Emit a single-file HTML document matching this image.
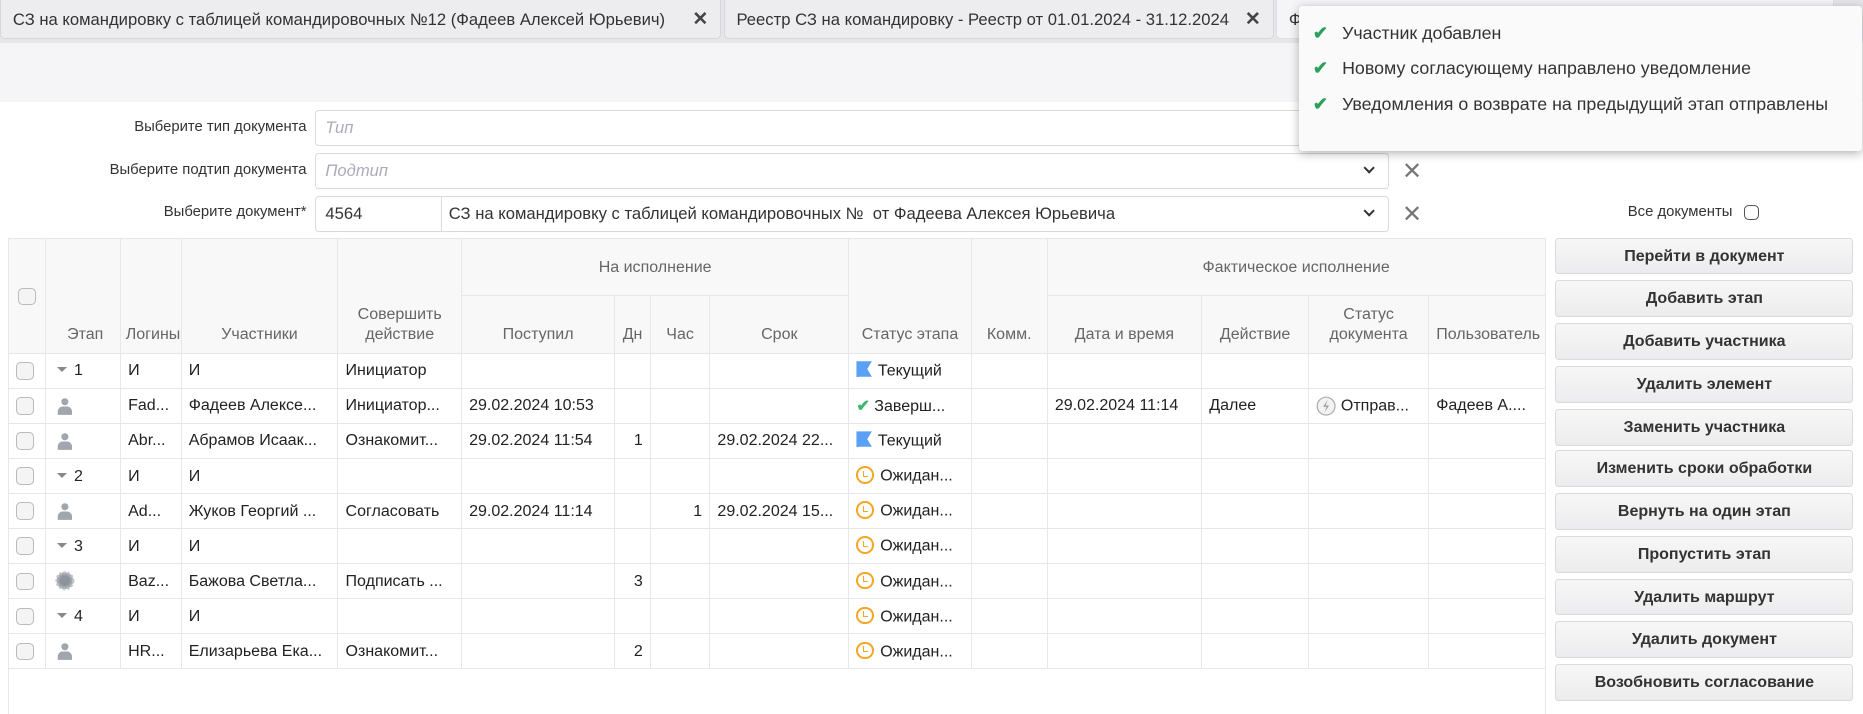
<!DOCTYPE html>
<html><head><meta charset="utf-8"><style>
*{box-sizing:border-box;margin:0;padding:0}
html,body{width:1863px;height:714px;overflow:hidden;background:#fff}
#w{position:relative;width:1568px;height:601px;zoom:1.18814;font-family:"Liberation Sans",sans-serif;color:#333;font-size:14px}
.tabs{position:absolute;left:0;top:0;width:1568px;height:36px;background:#e6e6ea}
.tab{position:absolute;top:0;height:33px;background:#ededf0;border:1px solid #d6d6dc;border-top:none;border-radius:0 0 4px 4px;font-size:14px;line-height:33px;padding-left:10px;color:#333;white-space:nowrap;overflow:hidden}
.tab .x{position:absolute;right:10px;top:0;font-weight:bold;font-size:16px;color:#444}
.band{position:absolute;left:0;top:36px;width:1568px;height:50px;background:#f5f5f7}
.lbl{position:absolute;right:1310px;font-size:12.5px;color:#333;text-align:right;white-space:nowrap}
.inp{position:absolute;left:265px;width:904px;height:30px;border:1px solid #d9d9e0;border-radius:3px;background:#fff;font-size:14px;line-height:28px;padding-left:8px}
.ph{color:#aab;font-style:italic}
.chev{position:absolute;right:12px;top:8px;width:7px;height:7px;border-right:2px solid #333;border-bottom:2px solid #333;transform:rotate(45deg)}
.clr{position:absolute;left:1180px;font-size:20px;color:#777}
table{position:absolute;left:7px;top:200px;border-collapse:collapse;table-layout:fixed;width:1293px}
td,th{border:1px solid #e6e6ec;font-size:13.5px;white-space:nowrap;overflow:hidden;padding:0 6px}
th{background:#f8f8f9;color:#666;font-weight:normal;text-align:center;vertical-align:bottom;padding-bottom:7px;line-height:17px}
th.g{vertical-align:middle;padding:0}
td{height:29.5px;color:#222}
.cb{display:inline-block;width:15px;height:15px;border:1px solid #bbb;border-radius:4px;background:#f4f4f4;vertical-align:middle}
.tri{display:inline-block;width:0;height:0;border-left:5px solid transparent;border-right:5px solid transparent;border-top:5px solid #888;margin:0 6px 2px 3px;vertical-align:middle}
.r{text-align:right}
.flag{display:inline-block;width:13px;height:13px;background:#5aa0f5;clip-path:polygon(0 0,100% 0,70% 50%,100% 100%,15% 100%,15% 110%,0 110%);vertical-align:-1px;margin-right:5px}
.clk{display:inline-block;width:15px;height:15px;border:2px solid #f5a623;border-radius:50%;vertical-align:-3px;margin-right:5px;position:relative}
.clk:after{content:"";position:absolute;left:4px;top:2px;width:3px;height:4px;border-left:1.5px solid #f5a623;border-bottom:1.5px solid #f5a623}
.btn{position:absolute;left:1309px;width:251px;height:31px;border:1px solid #dadade;border-radius:3px;background:linear-gradient(#f7f7f7,#ececee);font-size:13.5px;font-weight:bold;color:#333;text-align:center;line-height:29px}
.toast{position:absolute;left:1093px;top:5px;width:474px;height:122px;background:#fafafa;border-radius:3px;box-shadow:0 2px 8px rgba(0,0,0,.3);font-size:15px;color:#333}
.toast div{position:absolute;left:12px}
.toast b{color:#2aa05a;margin-right:12px;font-weight:bold}
svg{vertical-align:middle}
</style></head><body><div id="w">
<div class="tabs">
<div class="tab" style="left:0;width:607px">СЗ на командировку с таблицей командировочных №12 (Фадеев Алексей Юрьевич)<span class="x">✕</span></div>
<div class="tab" style="left:609px;width:463px">Реестр СЗ на командировку - Реестр от 01.01.2024 - 31.12.2024<span class="x">✕</span></div>
<div class="tab" style="left:1074px;width:470px;background:#f5f5f7;border-color:#e0e0e4">Ф</div>
</div>
<div class="band"></div>
<div class="lbl" style="top:100px">Выберите тип документа</div>
<div class="inp" style="top:93px"><span class="ph">Тип</span><span class="chev"></span></div>
<div class="clr" style="top:96px">✕</div>
<div class="lbl" style="top:136px">Выберите подтип документа</div>
<div class="inp" style="top:129px"><span class="ph">Подтип</span><span class="chev"></span></div>
<div class="clr" style="top:132px">✕</div>
<div class="lbl" style="top:172px">Выберите документ*</div>
<div class="inp" style="top:165px">4564<span style="position:absolute;left:105px;top:0;bottom:0;border-left:1px solid #d9d9e0;padding-left:6px">СЗ на командировку с таблицей командировочных №&nbsp; от Фадеева Алексея Юрьевича</span><span class="chev"></span></div>
<div class="clr" style="top:168px">✕</div>
<div style="position:absolute;left:1370px;top:172px;font-size:12.5px">Все документы <span class="cb" style="background:#fff;border-color:#555;width:13px;height:13px;margin-left:6px"></span></div>

<table>
<colgroup><col style="width:31px"><col style="width:63px"><col style="width:51px"><col style="width:132px"><col style="width:104px"><col style="width:129px"><col style="width:30px"><col style="width:50px"><col style="width:117px"><col style="width:103px"><col style="width:64px"><col style="width:130px"><col style="width:90px"><col style="width:101px"><col style="width:98px"></colgroup>
<tr style="height:48px"><th rowspan="2" style="vertical-align:middle;padding:0"><span class="cb"></span></th><th rowspan="2" class="r" style="padding-right:14px">Этап</th><th rowspan="2" style="text-align:left;padding-left:4px">Логины</th><th rowspan="2">Участники</th><th rowspan="2">Совершить<br>действие</th><th colspan="4" class="g">На исполнение</th><th rowspan="2">Статус этапа</th><th rowspan="2">Комм.</th><th colspan="4" class="g">Фактическое исполнение</th></tr>
<tr style="height:49px"><th>Поступил</th><th>Дн</th><th>Час</th><th>Срок</th><th>Дата и время</th><th>Действие</th><th>Статус<br>документа</th><th style="text-align:left;padding-left:6px">Пользователь</th></tr>
<tr><td><span class="cb"></span></td><td><span class="tri"></span>1</td><td>И</td><td>И</td><td>Инициатор</td><td></td><td></td><td></td><td></td><td><span class="flag"></span>Текущий</td><td></td><td></td><td></td><td></td><td></td></tr>
<tr><td><span class="cb"></span></td><td><svg width="20" height="16" viewBox="0 0 20 16"><circle cx="10" cy="4" r="3" fill="#a0a6ad"/><path d="M4 15v-3c0-2 2-4 4-4h4c2 0 4 2 4 4v3z" fill="#a0a6ad"/></svg></td><td>Fad...</td><td>Фадеев Алексе...</td><td>Инициатор...</td><td>29.02.2024 10:53</td><td></td><td></td><td></td><td><span style="color:#3bb86b;font-weight:bold">✔</span> Заверш...</td><td></td><td>29.02.2024 11:14</td><td>Далее</td><td><svg width="17" height="17" viewBox="0 0 17 17"><circle cx="8.5" cy="8.5" r="7.5" fill="#f2f2f2" stroke="#aaa"/><path d="M10 3L6 9h3l-2 5 4-6H8z" fill="#999"/></svg> Отправ...</td><td>Фадеев А....</td></tr>
<tr><td><span class="cb"></span></td><td><svg width="20" height="16" viewBox="0 0 20 16"><circle cx="10" cy="4" r="3" fill="#a0a6ad"/><path d="M4 15v-3c0-2 2-4 4-4h4c2 0 4 2 4 4v3z" fill="#a0a6ad"/></svg></td><td>Abr...</td><td>Абрамов Исаак...</td><td>Ознакомит...</td><td>29.02.2024 11:54</td><td class="r">1</td><td></td><td>29.02.2024 22...</td><td><span class="flag"></span>Текущий</td><td></td><td></td><td></td><td></td><td></td></tr>
<tr><td><span class="cb"></span></td><td><span class="tri"></span>2</td><td>И</td><td>И</td><td></td><td></td><td></td><td></td><td></td><td><span class="clk"></span>Ожидан...</td><td></td><td></td><td></td><td></td><td></td></tr>
<tr><td><span class="cb"></span></td><td><svg width="20" height="16" viewBox="0 0 20 16"><circle cx="10" cy="4" r="3" fill="#a0a6ad"/><path d="M4 15v-3c0-2 2-4 4-4h4c2 0 4 2 4 4v3z" fill="#a0a6ad"/></svg></td><td>Ad...</td><td>Жуков Георгий ...</td><td>Согласовать</td><td>29.02.2024 11:14</td><td></td><td class="r">1</td><td>29.02.2024 15...</td><td><span class="clk"></span>Ожидан...</td><td></td><td></td><td></td><td></td><td></td></tr>
<tr><td><span class="cb"></span></td><td><span class="tri"></span>3</td><td>И</td><td>И</td><td></td><td></td><td></td><td></td><td></td><td><span class="clk"></span>Ожидан...</td><td></td><td></td><td></td><td></td><td></td></tr>
<tr><td><span class="cb"></span></td><td><svg width="20" height="18" viewBox="0 0 20 18"><circle cx="10" cy="9" r="7" fill="#a0a6ad" stroke="#c0c4c8" stroke-width="2" stroke-dasharray="2 1.5"/><circle cx="10" cy="9" r="4.5" fill="#8d949b"/></svg></td><td>Baz...</td><td>Бажова Светла...</td><td>Подписать ...</td><td></td><td class="r">3</td><td></td><td></td><td><span class="clk"></span>Ожидан...</td><td></td><td></td><td></td><td></td><td></td></tr>
<tr><td><span class="cb"></span></td><td><span class="tri"></span>4</td><td>И</td><td>И</td><td></td><td></td><td></td><td></td><td></td><td><span class="clk"></span>Ожидан...</td><td></td><td></td><td></td><td></td><td></td></tr>
<tr><td><span class="cb"></span></td><td><svg width="20" height="16" viewBox="0 0 20 16"><circle cx="10" cy="4" r="3" fill="#a0a6ad"/><path d="M4 15v-3c0-2 2-4 4-4h4c2 0 4 2 4 4v3z" fill="#a0a6ad"/></svg></td><td>HR...</td><td>Елизарьева Ека...</td><td>Ознакомит...</td><td></td><td class="r">2</td><td></td><td></td><td><span class="clk"></span>Ожидан...</td><td></td><td></td><td></td><td></td><td></td></tr>
</table>
<div style="position:absolute;left:7px;top:562px;width:1294px;height:40px;border:1px solid #e6e6ec;border-top:none"></div>

<div class="btn" style="top:200px">Перейти в документ</div>
<div class="btn" style="top:236px">Добавить этап</div>
<div class="btn" style="top:272px">Добавить участника</div>
<div class="btn" style="top:308px">Удалить элемент</div>
<div class="btn" style="top:344px">Заменить участника</div>
<div class="btn" style="top:379px">Изменить сроки обработки</div>
<div class="btn" style="top:415px">Вернуть на один этап</div>
<div class="btn" style="top:451px">Пропустить этап</div>
<div class="btn" style="top:487px">Удалить маршрут</div>
<div class="btn" style="top:523px">Удалить документ</div>
<div class="btn" style="top:559px">Возобновить согласование</div>

<div class="toast">
<div style="top:14px"><b>✔</b>Участник добавлен</div>
<div style="top:44px"><b>✔</b>Новому согласующему направлено уведомление</div>
<div style="top:74px"><b>✔</b>Уведомления о возврате на предыдущий этап отправлены</div>
</div>
</div></body></html>
